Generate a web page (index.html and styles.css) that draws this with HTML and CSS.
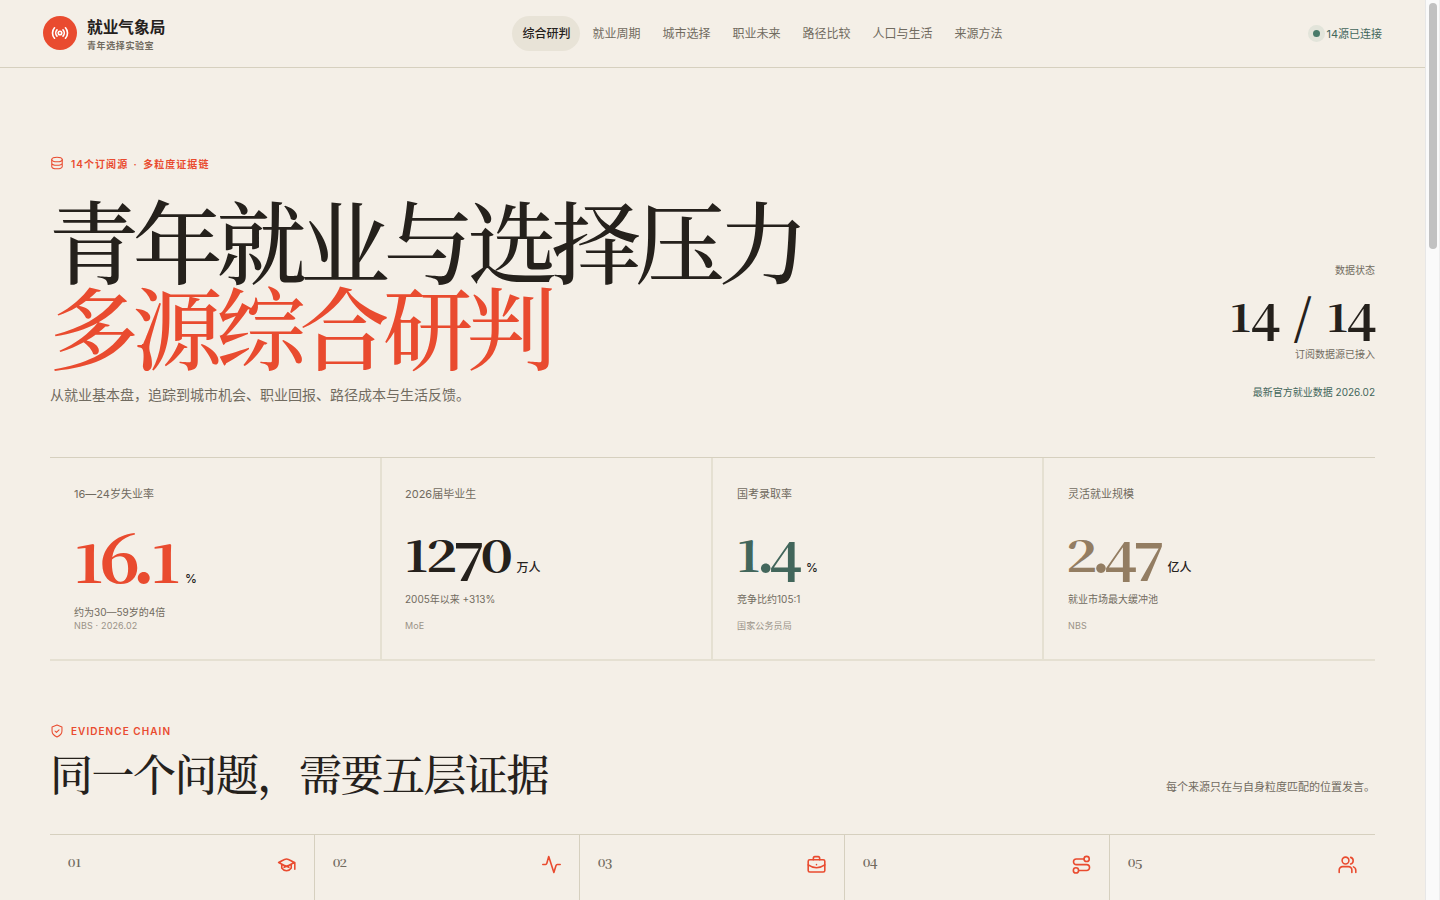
FILE: index.html
```html
<!DOCTYPE html>
<html lang="zh-CN">
<head>
<meta charset="utf-8">
<title>就业气象局</title>
<link rel="stylesheet" href="styles.css">
</head>
<body>
<div class="page">
  <header class="top">
    <div class="brand">
      <span class="logo"><svg class="icon logo-icon" viewBox="0 0 24 24"><circle cx="12" cy="12" r="2.3"/><path d="M8 7.8c-2.2 2.3-2.2 6.100 0 8.400M16 7.800c2.200 2.300 2.200 6.100 0 8.400M4.700 5c-3.600 3.900-3.600 10.100 0 14M19.300 5c3.600 3.900 3.600 10.100 0 14"/></svg></span>
      <div><div class="brand-name">就业气象局</div><div class="brand-sub">青年选择实验室</div></div>
    </div>
    <nav class="nav"><a class="active">综合研判</a><a>就业周期</a><a>城市选择</a><a>职业未来</a><a>路径比较</a><a>人口与生活</a><a>来源方法</a></nav>
    <div class="status"><i class="dot"></i><span>14源已连接</span></div>
  </header>
  <main>
    <section class="hero">
      <div>
        <div class="eyebrow"><svg class="icon" viewBox="0 0 24 24"><ellipse cx="12" cy="6" rx="9" ry="4"/><path d="M3 6v12c0 2.200 4 4 9 4s9-1.800 9-4V6M3 12c0 2.200 4 4 9 4s9-1.800 9-4"/></svg><span>14个订阅源 · 多粒度证据链</span></div>
        <h1><span class="line">青年就业与选择压力</span><em class="line">多源综合研判</em></h1>
        <p class="lead">从就业基本盘，追踪到城市机会、职业回报、路径成本与生活反馈。</p>
      </div>
      <aside>
        <div class="small">数据状态</div>
        <div class="big"><span class="x one">1</span><span class="d">4</span><span class="slash">/</span><span class="x one">1</span><span class="d">4</span></div>
        <div class="small">订阅数据源已接入</div>
        <div class="latest">最新官方就业数据 2026.02</div>
      </aside>
    </section>
    <section class="metrics">
      <article class="lead-metric"><h3>16—24岁失业率</h3><div class="value red"><b class="num"><span class="x one">1</span><span class="a">6</span><span class="pt">.</span><span class="x one">1</span></b><small>%</small></div><p>约为30—59岁的4倍</p><footer>NBS · 2026.02</footer></article>
      <article><h3>2026届毕业生</h3><div class="value"><b class="num"><span class="x one">1</span><span class="x">2</span><span class="d seven">7</span><span class="x zero">0</span></b><small>万人</small></div><p>2005年以来 +313%</p><footer>MoE</footer></article>
      <article><h3>国考录取率</h3><div class="value green"><b class="num"><span class="x one">1</span><span class="pt">.</span><span class="d">4</span></b><small>%</small></div><p>竞争比约105:1</p><footer>国家公务员局</footer></article>
      <article><h3>灵活就业规模</h3><div class="value tan"><b class="num"><span class="x">2</span><span class="pt">.</span><span class="d">4</span><span class="d seven">7</span></b><small>亿人</small></div><p>就业市场最大缓冲池</p><footer>NBS</footer></article>
    </section>
    <section class="evidence">
      <div class="eyebrow"><svg class="icon" viewBox="0 0 24 24"><path d="M12 1.800 20.500 5v7c0 5-3.500 8-8.500 10.200C7 20 3.500 17 3.500 12V5Z"/><path d="m8.500 12 2.500 2.500L15.500 10"/></svg><span>EVIDENCE CHAIN</span></div>
      <div class="section-head"><h2>同一个问题，需要五层证据</h2><p>每个来源只在与自身粒度匹配的位置发言。</p></div>
      <div class="steps">
        <div><span class="idx"><span class="x zero">0</span><span class="x">1</span></span><svg class="icon" viewBox="0 0 24 24"><path d="M2 9.500C6 8 8.500 5 12 5s6 3 10 4.500c-4 1.500-6.500 4.500-10 4.500S6 11 2 9.500ZM6 12.500v4c3 4.500 9 4.500 12 0v-4M9 15.500c1.500-1 4.500-1 6 0M22.500 9.500V18"/></svg></div>
        <div><span class="idx"><span class="x zero">0</span><span class="x">2</span></span><svg class="icon" viewBox="0 0 24 24"><path d="M1 12h3.500c1 0 1.300-.5 1.600-1.500L8.500 2 15 22l2.600-8.500c.3-1 .8-1.500 1.800-1.500H23"/></svg></div>
        <div><span class="idx"><span class="x zero">0</span><span class="d">3</span></span><svg class="icon" viewBox="0 0 24 24"><rect x="1.500" y="6" width="21" height="15.500" rx="2"/><path d="M8 6V4.500C8 3 8.700 2 10 2h4c1.300 0 2 1 2 2.500V6M1.500 12.500C8 17 16 17 22.500 12.500M12 12.200v.2"/></svg></div>
        <div><span class="idx"><span class="x zero">0</span><span class="d">4</span></span><svg class="icon" viewBox="0 0 24 24"><circle cx="18.500" cy="5" r="3.300"/><circle cx="5" cy="19.500" r="3.300"/><path d="M15 5H5.500a3.600 3.600 0 0 0 0 7.200h13a3.600 3.600 0 0 1 0 7.300H8.500"/></svg></div>
        <div><span class="idx"><span class="x zero">0</span><span class="d">5</span></span><svg class="icon" viewBox="0 0 24 24"><circle cx="9.500" cy="7" r="4.300"/><path d="M1.500 22v-3a4.300 4.300 0 0 1 4.300-4.300h7.400a4.300 4.300 0 0 1 4.300 4.300v3M16 3a4.300 4.300 0 0 1 0 8.300M19.500 15c2 .8 3 2.500 3 4.500v2.500"/></svg></div>
      </div>
    </section>
  </main>
</div>
<div class="scroll"><div class="thumb"></div></div>
</body>
</html>
```
FILE: styles.css
```css
* { box-sizing: border-box; }
body { margin: 0; width: 1440px; height: 900px; overflow: hidden; display: flex; background: #f4efe7; color: #25211c; font-family: Inter, "Noto Sans CJK SC", sans-serif; }
h1, h2, h3, p { margin: 0; font-weight: 400; }
.page { width: 1425px; height: 900px; overflow: hidden; }
.scroll { width: 15px; background: #fafafa; border-left: 1px solid #e7e7e7; border-right: 1px solid #ededed; padding: 3px 2px 0 3px; }
.thumb { width: 8px; height: 246px; border-radius: 4px; background: #c1c1c1; }
.icon { width: 14px; height: 14px; flex: none; fill: none; stroke: currentColor; stroke-width: 1.8; stroke-linecap: round; stroke-linejoin: round; }
.top { height: 68px; border-bottom: 1px solid #d6d0bf; display: grid; grid-template-columns: 512.400px 1fr auto; align-items: center; padding-right: 43px; }
.brand { display: flex; align-items: center; gap: 10px; padding-left: 43px; }
.logo { width: 34px; height: 34px; margin-bottom: 1px; border-radius: 50%; background: #e94b2f; color: #fff; display: flex; align-items: center; justify-content: center; }
.logo-icon { width: 18px; height: 18px; stroke-width: 2.200; }
.brand-name { font-size: 15.700px; font-weight: 700; line-height: 22px; padding-top: 2px; }
.brand-sub { font-size: 9px; font-weight: 600; line-height: 14px; letter-spacing: .6px; color: #716b60; }
.nav { display: flex; gap: 2px; font-size: 12px; color: #716b60; }
.nav a { height: 35px; line-height: 35px; padding: 0 10px; border-radius: 18px; }
.nav .active { background: #e8e3d7; color: #25211c; font-weight: 500; }
.status { display: flex; align-items: center; gap: 6px; font-size: 11px; line-height: 16px; color: #42665b; }
.dot { width: 7px; height: 7px; border-radius: 50%; background: #477a69; box-shadow: 0 0 0 5px #e2e4da; }
main { padding: 0 50px; }
.hero { height: 389px; padding-top: 87px; display: flex; justify-content: space-between; }
.eyebrow { height: 16px; display: flex; align-items: center; gap: 7px; color: #e94b2f; font-size: 10px; font-weight: 600; letter-spacing: 1.050px; word-spacing: 1.800px; }
.evidence .eyebrow { word-spacing: 0; }
h1, h2, .num, .big, .idx { font-family: "Noto Serif CJK SC", "Noto Serif SC", "Liberation Serif", serif; }
h1 { margin-top: 25px; margin-left: -1px; font-size: 90px; font-weight: 500; letter-spacing: -6.300px; line-height: 85.500px; white-space: nowrap; }
h1 .line { display: block; }
h1 em { font-style: normal; letter-spacing: -6.500px; color: #e94b2f; }
.lead { margin-top: 18px; font-size: 14px; line-height: 20px; color: #716b60; }
aside { padding-top: 107px; text-align: right; }
.small { font-size: 10px; line-height: 16px; color: #716b60; }
/* old-style figures: x-height (x), ascending (a) and descending (d) digits */
.x, .a, .d, .pt, .slash { display: inline-flex; justify-content: center; line-height: 1; }
.x { font-size: .71em; width: .665em; transform: scaleX(1.300); }
.one { width: .565em; transform: scaleX(1.200); }
.zero { width: .720em; transform: scaleX(1.350); }
.a { font-size: .9em; width: .510em; transform: scaleX(1.050); }
.d { font-size: .89em; width: .575em; transform: translateY(.180em) scaleX(1.080); }
.seven { width: .510em; }
.pt { width: .190em; }
.big { height: 68px; font-size: 53px; font-weight: 700; line-height: 48px; padding-top: 7px; white-space: nowrap; }
.big .slash { width: 48px; font-size: 48px; transform: translateY(2px); }
.latest { margin-top: 22px; font-size: 10px; line-height: 16px; color: #42665b; }
.metrics { height: 204px; display: grid; grid-template-columns: repeat(3, 331px) 1fr; border-top: 1px solid #d6d0bf; border-bottom: 2px solid #e5e0d2; }
.metrics article { padding: 27px 24px 0; }
.metrics article + article { border-left: 2px solid #e5e0d2; margin-left: -1px; padding-left: 23px; }
.metrics article:nth-child(n+3) { padding-left: 24px; }
h3 { font-size: 11px; line-height: 18px; color: #716b60; }
.value { height: 80px; padding-top: 9px; display: flex; align-items: baseline; }
.num { font-size: 58px; line-height: 70px; font-weight: 700; white-space: nowrap; }
.value small { font-size: 12px; font-weight: 500; margin-left: 5px; color: #25211c; }
.metrics p { margin-top: 8px; font-size: 10px; line-height: 16px; color: #716b60; }
.metrics footer { margin-top: 12px; font-size: 9px; line-height: 14px; letter-spacing: .150px; color: #9a9387; }
.lead-metric .num { font-size: 73px; }
.lead-metric .value { height: 92px; padding-top: 12px; }
.metrics .lead-metric p { margin-top: 9px; }
.metrics .lead-metric footer { margin-top: -1px; }
.red .num { color: #e94b2f; }
.green .num { color: #42665b; }
.tan .num { color: #937d62; }
.evidence { padding-top: 62px; }
.section-head { display: flex; justify-content: space-between; height: 95px; }
h2 { margin-top: 6px; font-size: 43px; font-weight: 500; line-height: 56px; letter-spacing: -1.500px; white-space: nowrap; }
.section-head p { margin-top: 39px; font-size: 11px; line-height: 18px; color: #716b60; }
.steps { display: grid; grid-template-columns: repeat(5, 1fr); border-top: 1px solid #d6d0bf; }
.steps > div { height: 100px; display: flex; justify-content: space-between; padding: 20px 18px; border-right: 1px solid #d6d0bf; color: #e94b2f; }
.steps > div:last-child { border-right: 0; }
.steps .icon { width: 19px; height: 19px; stroke-width: 2; }
.idx { font-size: 14px; font-weight: 600; line-height: 13px; color: #716b60; }
```
